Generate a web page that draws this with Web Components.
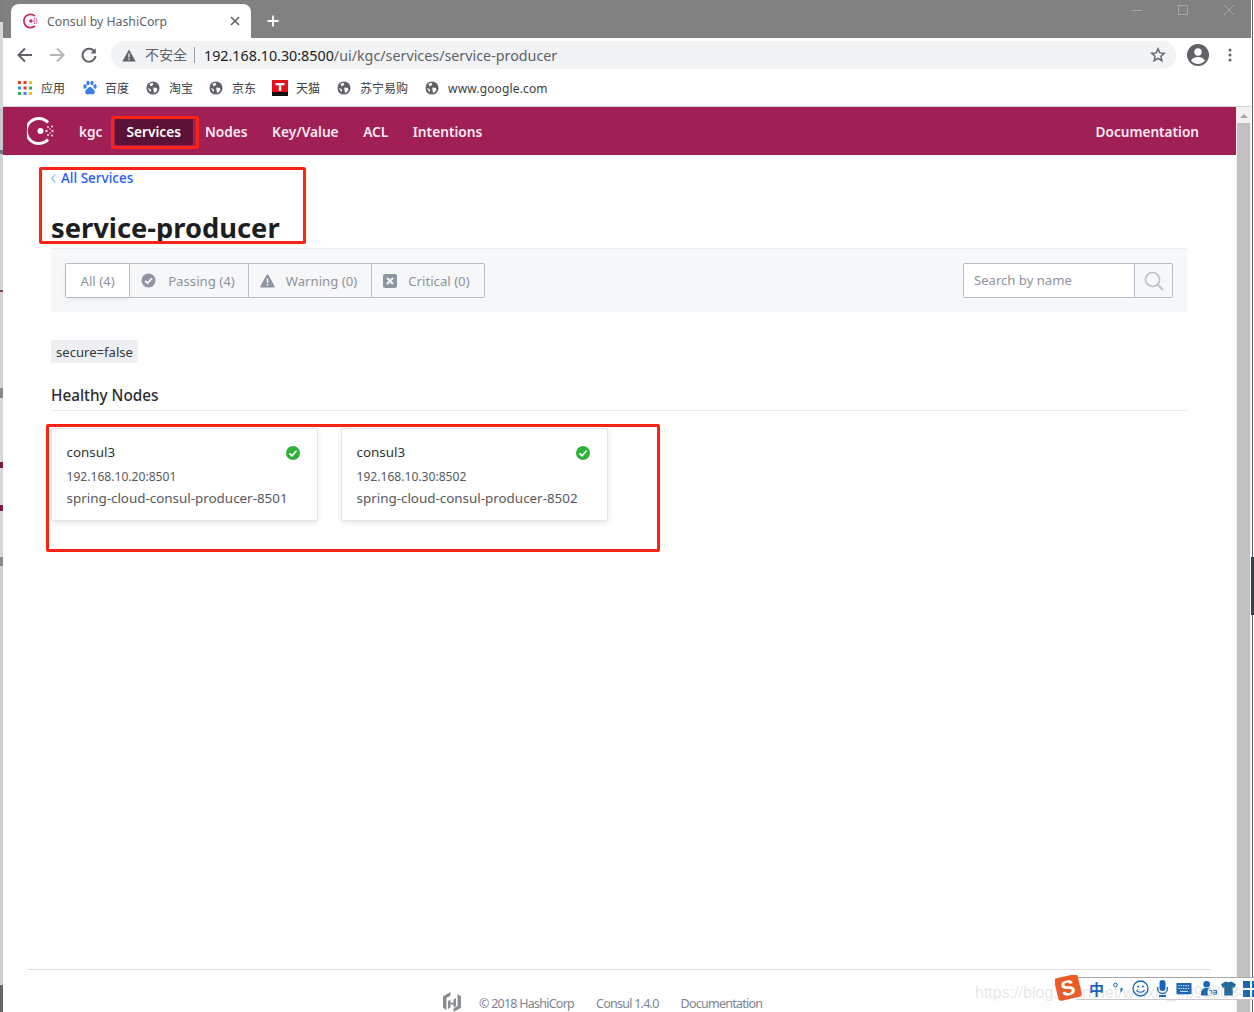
<!DOCTYPE html>
<html lang="zh">
<head>
<meta charset="utf-8">
<title>Consul by HashiCorp</title>
<style>
  html, body { margin: 0; padding: 0; height: 1012px; overflow: hidden; background: #fff; }
  body { font-family: "Noto Sans", "Noto Sans CJK SC", sans-serif; }
</style>
</head>
<body>
<browser-window>
  <title-bar slot="top"></title-bar>
  <url-bar slot="top" url="192.168.10.30:8500/ui/kgc/services/service-producer"></url-bar>
  <bookmark-bar slot="top"></bookmark-bar>

  <consul-nav></consul-nav>
  <service-page name="service-producer">
    <filter-bar slot="filters"></filter-bar>
    <tag-chip slot="tags">secure=false</tag-chip>
    <node-card slot="nodes" name="consul3" address="192.168.10.20:8501" service="spring-cloud-consul-producer-8501"></node-card>
    <node-card slot="nodes" name="consul3" address="192.168.10.30:8502" service="spring-cloud-consul-producer-8502"></node-card>
  </service-page>
  <page-footer></page-footer>
</browser-window>
<red-marks></red-marks>
<ime-bar></ime-bar>

<script>
// Helper so each element only has to hand over its markup
class ShadowElement extends HTMLElement {
  constructor() {
    super()
    this.attachShadow({ mode: 'open' })
  }
  connectedCallback() {
    this.shadowRoot.innerHTML = this.render()
  }
}

// WINDOW FRAME

customElements.define('browser-window', class extends ShadowElement {
  render() {
    return `
    <style>
      :host { display: flex; height: 1012px; width: 1254px; overflow: hidden; background: #fff; }
      .left { width: 3px; flex: none; background: linear-gradient(#7d7e7d 0 22px, #d8d8d8 22px 108px, #c9c9c9 108px 150px, #6d7c8c 150px 154px, #d2d2d2 154px 290px, #7a4a40 290px 292px, #d2d2d2 292px 388px, #8a8a8a 388px 398px, #d8d8d8 398px 462px, #7a1a45 462px 468px, #d8d8d8 468px 505px, #7a1a45 505px 511px, #d8d8d8 511px 557px, #8a8a8a 557px 566px, #d0d0d0 566px 985px, #666 985px); }
      .win { width: 1248px; flex: none; display: flex; flex-direction: column; }
      .right { width: 3px; flex: none; display: flex; flex-direction: column; background: #fff; }
      .right i { display: block; width: 1px; margin-left: 1px; flex: 1; background: #5c6066; }
      .right b { display: block; height: 58px; background: #3c4150; flex: none; }
      .top { flex: none; }
      .page { flex: 1; min-height: 0; display: flex; border-top: 1px solid #d4d4d4; }
      .main { flex: 1; min-width: 0; display: flex; flex-direction: column; }
      .bar { width: 15px; flex: none; background: #f1f1f1; display: flex; flex-direction: column; align-items: center; }
      .arrow { width: 0; height: 0; margin-top: 7px; border: 4px solid transparent; border-top: 0; border-bottom: 4px solid #a3a3a3; }
      .thumb { width: 13px; flex: 1; margin-top: 5px; background: #c1c1c1; }
    </style>
    <div class="left"></div>
    <div class="win">
      <div class="top"><slot name="top"></slot></div>
      <div class="page">
        <div class="main"><slot></slot></div>
        <div class="bar"><div class="arrow"></div><div class="thumb"></div></div>
      </div>
    </div>
    <div class="right"><i style="flex:none;height:557px"></i><b></b><i></i></div>`
  }
})

customElements.define('title-bar', class extends ShadowElement {
  render() {
    return `
    <style>
      :host { display: flex; height: 38px; background: #808180; align-items: flex-end; padding-left: 8px; position: relative; font-size: 12.3px; }
      .tab { width: 240px; height: 34px; box-sizing: border-box; background: #fff; border-radius: 8px 8px 0 0; display: flex; align-items: center; padding: 0 10px 0 12px; color: #5f6368; }
      .tab svg { flex: none; margin-right: 8px; }
      .tab span { flex: 1; white-space: nowrap; }
      .plus { margin: 0 0 10px 15px; display: block; }
      .ctl { margin-left: auto; margin-right: -1px; display: flex; align-self: flex-start; }
      .ctl svg { display: block; width: 46px; height: 20px; }
    </style>
    <div class="tab">
      <svg width="16" height="16" viewBox="0 0 16 16"><path d="M11.800 3a6.600 6.600 0 1 0 0 10" fill="none" stroke="#ca2171" stroke-width="1.700"/><circle cx="7.900" cy="8" r="1.700" fill="#ca2171"/><g fill="#ca2171"><circle cx="11" cy="8" r=".8"/><circle cx="13.600" cy="8" r=".8"/><circle cx="11.600" cy="5.800" r=".7"/><circle cx="11.600" cy="10.200" r=".7"/><circle cx="13.400" cy="6" r=".6"/><circle cx="13.400" cy="10" r=".6"/></g></svg>
      <span>Consul by HashiCorp</span>
      <svg style="margin:0" width="12" height="12" viewBox="0 0 12 12"><path d="M2 2l8 8M10 2l-8 8" stroke="#5f6368" stroke-width="1.600"/></svg>
    </div>
    <svg class="plus" width="14" height="14" viewBox="0 0 14 14"><path d="M7 1.500v11M1.500 7h11" stroke="#fff" stroke-width="1.800"/></svg>
    <div class="ctl">
      <svg viewBox="0 0 46 20"><path d="M18 10.500h10" stroke="#a6a8a6"/></svg>
      <svg viewBox="0 0 46 20"><rect x="18.500" y="5.500" width="9" height="9" fill="none" stroke="#a6a8a6"/></svg>
      <svg viewBox="0 0 46 20"><path d="M18 5l10 10M28 5L18 15" stroke="#a6a8a6"/></svg>
    </div>`
  }
})

customElements.define('url-bar', class extends ShadowElement {
  render() {
    return `
    <style>
      :host { display: flex; height: 34px; background: #fff; align-items: center; padding: 0 0 0 12px; box-sizing: border-box; }
      svg { display: block; flex: none; }
      .nav { display: flex; gap: 12px; margin-right: 12px; align-items: center; }
      .pill { width: 1065px; height: 28px; box-sizing: border-box; background: #f1f3f4; border-radius: 14px; display: flex; align-items: center; padding: 0 10px 0 11px; }
      .warn { margin-right: 9px; }
      .sec { font-size: 14px; color: #5f6368; padding-right: 7px; border-right: 1px solid #9aa0a6; line-height: 16px; margin-right: 9px; white-space: nowrap; }
      .url { flex: 1; font-size: 14.3px; color: #202124; white-space: nowrap; }
      .url span { color: #5f6368; }
      .acct { margin-left: 10px; }
      .dots { margin-left: 18px; }
    </style>
    <div class="nav">
      <svg width="20" height="20" viewBox="0 0 20 20"><path d="M17 10H4M10 3.500L3.500 10l6.500 6.500" fill="none" stroke="#5f6368" stroke-width="2"/></svg>
      <svg width="20" height="20" viewBox="0 0 20 20"><path d="M3 10h13M10 3.500l6.500 6.500L10 16.500" fill="none" stroke="#b4b7ba" stroke-width="2"/></svg>
      <svg width="20" height="20" viewBox="0 0 20 20"><path d="M15.800 7.200A6.500 6.500 0 1 0 16.500 11" fill="none" stroke="#5f6368" stroke-width="2"/><path d="M16.800 3.200v5.300h-5.300z" fill="#5f6368"/></svg>
    </div>
    <div class="pill">
      <svg class="warn" width="14" height="13" viewBox="0 0 14 13"><path d="M7 .5L13.700 12.500H.3z" fill="#5f6368"/><path d="M7 4.500v4M7 9.500v1.500" stroke="#f1f3f4" stroke-width="1.300"/></svg>
      <span class="sec">不安全</span>
      <span class="url">${this.getAttribute('url').replace(/(:8500)(.*)/, '$1<span>$2</span>')}</span>
      <svg width="16" height="16" viewBox="0 0 16 16"><path d="M8 1.800l1.800 4.100 4.500.4-3.400 3 1 4.400L8 11.400l-3.900 2.300 1-4.400-3.400-3 4.500-.4z" fill="none" stroke="#5f6368" stroke-width="1.400"/></svg>
    </div>
    <svg class="acct" width="24" height="24" viewBox="0 0 24 24"><circle cx="12" cy="12" r="11" fill="#5f6368"/><circle cx="12" cy="9" r="3.700" fill="#fff"/><path d="M5 17.500c1.800-2.800 4.300-3.500 7-3.500s5.200.7 7 3.500a8.800 8.800 0 0 1-14 0z" fill="#fff"/></svg>
    <svg class="dots" width="4" height="14" viewBox="0 0 4 14"><g fill="#5f6368"><circle cx="2" cy="2" r="1.500"/><circle cx="2" cy="7" r="1.500"/><circle cx="2" cy="12" r="1.500"/></g></svg>`
  }
})

const globeIcon = `<svg width="14" height="14" viewBox="0 0 16 16"><circle cx="8" cy="8" r="7.500" fill="#5f6368"/><path d="M4 3.500l3-1.500 1.500 1.500L7 5.500l-2 .5zM8.500 7.500l4 .5.500 2.500-2.500 3-1.500-.5-.5-3zM2 8l3 1 1 2-1 1.500z" fill="#fff"/></svg>`

customElements.define('bookmark-bar', class extends ShadowElement {
  render() {
    const items = [
      ['应用', `<svg width="14" height="14" viewBox="0 0 14 14">${[['#e33b2e', '#e33b2e', '#fbbc05'], ['#4285f4', '#e33b2e', '#34a853'], ['#34a853', '#4285f4', '#fbbc05']].map((row, y) => row.map((c, x) => `<rect x="${x * 5.5}" y="${y * 5.5}" width="3" height="3" fill="${c}"/>`).join('')).join('')}</svg>`, 9],
      ['百度', `<svg width="16" height="16" viewBox="0 0 16 16" fill="#3a7fe8"><ellipse cx="3" cy="6.500" rx="1.700" ry="2.200"/><ellipse cx="6" cy="3" rx="1.700" ry="2.300"/><ellipse cx="10" cy="3" rx="1.700" ry="2.300"/><ellipse cx="13" cy="6.500" rx="1.700" ry="2.200"/><path d="M8 7c-2 0-2.500 2-4 3-1.500 1.200-.8 4.500 1.500 4.500 1 0 1.500-.4 2.500-.4s1.500.4 2.500.4c2.300 0 3-3.300 1.500-4.500C10.500 9 10 7 8 7z"/></svg>`, 7],
      ['淘宝', globeIcon, 9],
      ['京东', globeIcon, 9],
      ['天猫', `<svg width="16" height="16" viewBox="0 0 16 16"><rect width="16" height="12" fill="#e8101c"/><path d="M0 12h16v4H0z" fill="#111"/><path d="M3.500 3h9v2.200H9.200V11H6.800V5.200H3.500z" fill="#fff"/></svg>`, 8],
      ['苏宁易购', globeIcon, 9],
      ['www.google.com', globeIcon, 9]
    ]
    return `
    <style>
      :host { display: flex; height: 34px; background: #fff; align-items: center; padding: 0 0 2px 15px; box-sizing: border-box; font-size: 12px; color: #3c4043; gap: 17px; }
      div { display: flex; align-items: center; white-space: nowrap; }
      div:nth-child(5), div:nth-child(6) { margin-left: -1px; }
      svg { display: block; flex: none; }
      div:last-child span { letter-spacing: .14px; }
    </style>
    ${items.map(([t, icon, gap]) => `<div>${icon}<span style="margin-left:${gap}px">${t}</span></div>`).join('')}`
  }
})

// CONSUL UI

customElements.define('consul-nav', class extends ShadowElement {
  render() {
    return `
    <style>
      :host { display: flex; flex: none; height: 48px; background: #a02056; align-items: center; padding: 0 37px 0 24px; box-sizing: border-box; color: #fbe9f1; font-size: 13.7px; font-weight: 600; }
      svg { display: block; margin-right: 12px; flex: none; }
      a { padding: 0 12px; line-height: 27px; border-radius: 2px; white-space: nowrap; }
      .on { background: #5c1137; color: #fff; }
      .gap { margin-left: .5px; }
      .doc { margin-left: auto; padding: 0; font-size: 13.6px; }
    </style>
    <svg width="28" height="28" viewBox="0 0 28 28"><path d="M21 5.500a12.500 12.500 0 1 0 0 17" fill="none" stroke="#fff" stroke-width="2.800"/><circle cx="13.500" cy="14" r="3" fill="#fff"/><g fill="#f5c5d9"><circle cx="19.500" cy="14" r="1.300"/><circle cx="25.500" cy="14" r="1.200"/><circle cx="21" cy="10" r="1.100"/><circle cx="21" cy="18" r="1.100"/><circle cx="25" cy="9.500" r="1.100"/><circle cx="25" cy="18.500" r="1.100"/><circle cx="23" cy="12" r=".8"/><circle cx="23" cy="16" r=".8"/></g></svg>
    <a>kgc</a><a class="on">Services</a><a>Nodes</a><a class="gap">Key/Value</a><a class="gap">ACL</a><a class="gap">Intentions</a>
    <a class="doc">Documentation</a>`
  }
})

customElements.define('service-page', class extends ShadowElement {
  render() {
    return `
    <style>
      :host { display: block; flex: 1; min-height: 0; padding: 0 49px 0 48px; color: #1f2124; }
      .crumb { height: 50px; padding-top: 14px; box-sizing: border-box; display: flex; align-items: flex-start; font-size: 13.5px; line-height: 18px; color: #1f5bff; font-weight: 500; white-space: nowrap; }
      .crumb svg { display: block; margin: 5px 5px 0 0; flex: none; }
      h1 { margin: 0; font-size: 27.3px; line-height: 46px; height: 43px; font-weight: 700; color: #1c1e21; white-space: nowrap; }
      .tags { margin-top: 28px; display: flex; }
      h2 { margin: 17px 0 0; height: 31px; box-sizing: border-box; font-size: 15.3px; line-height: 30px; font-weight: 500; color: #2a2c30; border-bottom: 1px solid #e6e9ef; }
      .nodes { display: flex; gap: 23px; margin-top: 17px; }
    </style>
    <div class="crumb"><svg width="5" height="9" viewBox="0 0 5 9"><path d="M4.300.5L.8 4.500l3.500 4" fill="none" stroke="#9bb7f5" stroke-width="1.200"/></svg>All Services</div>
    <h1>${this.getAttribute('name')}</h1>
    <slot name="filters"></slot>
    <div class="tags"><slot name="tags"></slot></div>
    <h2>Healthy Nodes</h2>
    <div class="nodes"><slot name="nodes"></slot></div>`
  }
})

customElements.define('filter-bar', class extends ShadowElement {
  render() {
    const icons = {
      passing: `<svg width="15" height="15" viewBox="0 0 15 15"><circle cx="7.500" cy="7.500" r="7" fill="#8f96a3"/><path d="M4 7.800l2.500 2.400L11 5.300" fill="none" stroke="#f5f6f8" stroke-width="1.800"/></svg>`,
      warning: `<svg width="15" height="14" viewBox="0 0 15 14"><path d="M7.500 .5c.5 0 .8.300 1 .6l6 11c.4.800 0 1.400-.8 1.400H1.300c-.8 0-1.200-.6-.8-1.400l6-11c.2-.3.500-.6 1-.6z" fill="#8f96a3"/><path d="M7.500 4.500v4.500M7.500 10v1.500" stroke="#f5f6f8" stroke-width="1.500"/></svg>`,
      critical: `<svg width="14" height="14" viewBox="0 0 14 14"><rect width="14" height="14" rx="2" fill="#8f96a3"/><path d="M4 4l6 6M10 4l-6 6" stroke="#f5f6f8" stroke-width="2"/></svg>`
    }
    return `
    <style>
      :host { display: flex; height: 64px; box-sizing: border-box; background: #f6f7f9; border-top: 1px solid #e8eaee; padding: 0 14px; align-items: center; justify-content: space-between; font-size: 13.2px; color: #8e939c; }
      .group { display: flex; height: 35px; box-sizing: border-box; border: 1px solid #b8bdc9; border-radius: 2px; }
      .f { display: flex; align-items: center; gap: 12px; padding: 0 13px 0 11px; border-left: 1px solid #b8bdc9; white-space: nowrap; }
      .f + .f + .f { gap: 11px; padding-right: 14px; }
      .all { background: #fff; border-left: 0; padding: 0 14.500px; box-shadow: 0 3px 6px rgba(31,33,36,.06); }
      .search { display: flex; width: 210px; height: 35px; box-sizing: border-box; border: 1px solid #b8bdc9; border-radius: 2px; }
      .input { flex: 1; background: #fff; padding-left: 10px; line-height: 33px; font-size: 13.1px; }
      .btn { width: 37px; border-left: 1px solid #b8bdc9; display: flex; align-items: center; justify-content: center; }
      svg { display: block; flex: none; }
    </style>
    <div class="group">
      <div class="f all">All (4)</div>
      <div class="f">${icons.passing}<span>Passing (4)</span></div>
      <div class="f">${icons.warning}<span>Warning (0)</span></div>
      <div class="f">${icons.critical}<span>Critical (0)</span></div>
    </div>
    <div class="search">
      <div class="input">Search by name</div>
      <div class="btn"><svg width="20" height="20" viewBox="0 0 20 20"><circle cx="8.500" cy="8.500" r="7" fill="none" stroke="#bcc1cc" stroke-width="1.700"/><path d="M13.500 13.500l5.500 5.500" stroke="#bcc1cc" stroke-width="2"/></svg></div>
    </div>`
  }
})

customElements.define('tag-chip', class extends ShadowElement {
  render() {
    return `
    <style>
      :host { display: block; background: #edeff3; border-radius: 2px; padding: 0 5px; height: 23px; line-height: 25px; font-size: 13.1px; color: #34373c; white-space: nowrap; }
    </style><slot></slot>`
  }
})

customElements.define('node-card', class extends ShadowElement {
  render() {
    return `
    <style>
      :host { display: block; width: 267px; height: 93px; box-sizing: border-box; border: 1px solid #e1e4ea; border-radius: 2px; box-shadow: 0 2px 5px rgba(31,33,36,.1); padding: 13px 15px 0 14.500px; background: #fff; }
      .head { display: flex; justify-content: space-between; align-items: center; height: 20px; font-size: 13.4px; color: #2f3135; }
      p { margin: 0; color: #55585e; white-space: nowrap; }
      .a { margin-top: 5px; line-height: 20px; font-size: 12.1px; }
      .s { line-height: 22px; font-size: 13.4px; }
      svg { display: block; }
    </style>
    <div class="head"><span>${this.getAttribute('name')}</span>
      <svg width="14" height="14" viewBox="0 0 14 14" style="margin:1px 2px 0 0"><circle cx="7" cy="7" r="7" fill="#2eb039"/><path d="M3.500 7.300l2.500 2.500 4.500-5" fill="none" stroke="#fff" stroke-width="1.700"/></svg>
    </div>
    <p class="a">${this.getAttribute('address')}</p>
    <p class="s">${this.getAttribute('service')}</p>`
  }
})

customElements.define('page-footer', class extends ShadowElement {
  render() {
    return `
    <style>
      :host { display: flex; flex: none; height: 43px; box-sizing: border-box; margin: 0 25px 0 24px; border-top: 1px solid #dfe1e5; align-items: flex-end; padding-left: 415px; font-size: 12.5px; letter-spacing: -.75px; color: #7d8490; gap: 22px; overflow: hidden; }
      span { line-height: 16px; white-space: nowrap; }
      svg { display: block; margin-right: -5px; flex: none; }
    </style>
    <svg width="20" height="20" viewBox="0 0 20 20" fill="#8a8d92"><path d="M8.500 0L1 4.300v11.400L4.500 18V6l4-2.300zM11.500 20l7.500-4.300V4.300L15.500 2v12l-4 2.300z"/><path d="M8.500 7.500v3.200h3V7.500l2.500-1.500v8l-2.500 1.500v-3h-3v3L6 17V9z"/></svg>
    <span>© 2018 HashiCorp</span><span>Consul 1.4.0</span><span>Documentation</span>`
  }
})

// THINGS DRAWN OVER THE SCREENSHOT

customElements.define('red-marks', class extends ShadowElement {
  render() {
    return `
    <style>
      :host { display: block; position: absolute; left: 0; top: 0; pointer-events: none; }
      div { position: absolute; box-sizing: border-box; border: 3px solid #fb2316; border-radius: 2px; }
    </style>
    <div style="left:111px;top:116px;width:88px;height:33px"></div>
    <div style="left:39px;top:167px;width:267px;height:77px"></div>
    <div style="left:46px;top:424px;width:614px;height:128px"></div>`
  }
})

customElements.define('ime-bar', class extends ShadowElement {
  render() {
    return `
    <style>
      :host { display: block; position: absolute; left: 1055px; top: 975px; width: 199px; height: 37px; overflow: hidden; pointer-events: none; font-family: "Noto Sans CJK SC", sans-serif; }
      .strip { position: absolute; left: 21px; right: 0; top: 2px; height: 23px; box-sizing: border-box; border-top: 1px solid #a8a8ac; border-bottom: 1px solid #c8c8cc; background: #fff; display: flex; align-items: center; padding-left: 13px; color: #1565b8; }
      .s { position: absolute; left: 1px; top: 1px; width: 24px; height: 23px; border-radius: 3px; background: #ee5a24; transform: rotate(-13deg); color: #fff; font: 900 21px/23px "Liberation Sans", sans-serif; text-align: center; }
      .zh { font-size: 15px; font-weight: 700; line-height: 20px; width: 15px; margin-right: 9px; }
      svg { display: block; flex: none; }
    </style>
    <div class="strip">
      <span class="zh">中</span>
      <svg style="margin-right:8px" width="11" height="17" viewBox="0 0 11 17" fill="#1565b8"><circle cx="2.500" cy="5" r="1.800" fill="none" stroke="#1565b8"/><path d="M8.500 8c1.500 0 1.800 2-.8 4.500L7 12c1-1 1-1.500.5-2-.6-1 0-2 1-2z"/></svg>
      <svg style="margin-right:8px" width="17" height="17" viewBox="0 0 17 17"><circle cx="8.500" cy="8.500" r="7.500" fill="none" stroke="#1565b8" stroke-width="1.300"/><circle cx="6" cy="6.500" r="1" fill="#1565b8"/><circle cx="11" cy="6.500" r="1" fill="#1565b8"/><path d="M4.500 10c1.500 3 6.500 3 8 0" fill="none" stroke="#1565b8" stroke-width="1.200"/></svg>
      <svg style="margin-right:8px" width="11" height="18" viewBox="0 0 11 18" fill="#1565b8"><rect x="2.500" y="0" width="6" height="11" rx="3"/><path d="M.7 7v2c0 6 9.600 6 9.600 0V7" fill="none" stroke="#1565b8" stroke-width="1.300"/><rect x="2" y="15" width="7" height="2"/></svg>
      <svg style="margin-right:8px" width="16" height="14" viewBox="0 0 17 14"><rect x=".5" y=".5" width="16" height="12" rx="1" fill="#1565b8"/><path d="M2.500 3.500h12M2.500 6.500h12" stroke="#fff" stroke-dasharray="1.500 1"/><path d="M4.500 9.500h8" stroke="#fff"/></svg>
      <svg style="margin-right:3px" width="18" height="17" viewBox="0 0 19 17" fill="#1565b8"><circle cx="7" cy="4" r="3.500"/><path d="M1 15c0-5 2-7 6-7 3 0 4 1 5 3v5H2z"/><rect x="8" y="9" width="11" height="7" rx="2" fill="#fff"/><path d="M10 10.500h2.500v4M14 10.500h3.500v4H14M14 12.500h3" fill="none" stroke="#1565b8"/></svg>
      <svg style="margin-right:7px" width="15" height="15" viewBox="0 0 16 15" fill="#1f6a9c"><path d="M0 3l5-3c1.500 1 4.500 1 6 0l5 3-2 4-1.500-.8V15h-9V6.200L2 7z"/></svg>
      <svg width="16" height="16" viewBox="0 0 16 16" fill="#1565b8"><rect width="7" height="7"/><rect x="9" width="7" height="7"/><rect y="9" width="7" height="7"/><rect x="9" y="9" width="7" height="7"/></svg>
    </div>
    <div class="s">S</div>`
  }
})

// Faint blog watermark across the bottom right corner, over the input method bar
customElements.define('blog-mark', class extends ShadowElement {
  render() {
    return `
    <style>
      :host { display: block; position: absolute; left: 975px; top: 984px; font: 16px/18px "Liberation Sans", sans-serif; color: rgba(140,140,140,.22); white-space: nowrap; pointer-events: none; }
    </style>https://blog.csdn.net/weixin_43908084`
  }
})
document.body.appendChild(document.createElement('blog-mark'))
</script>
</body>
</html>
